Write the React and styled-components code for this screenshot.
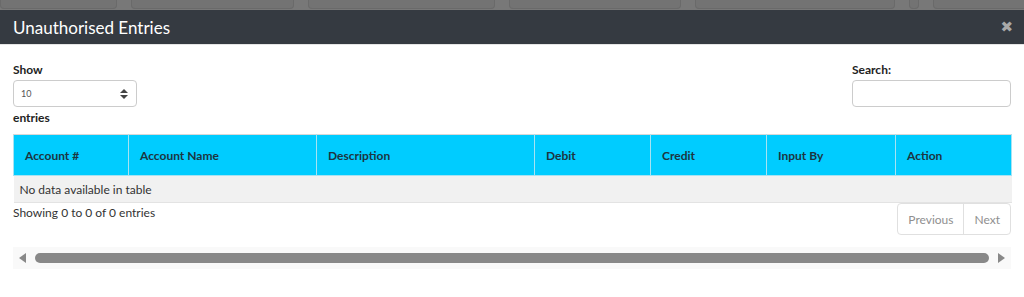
import styled, { createGlobalStyle } from "styled-components";

const Global = createGlobalStyle`
  html, body {
    margin: 0;
    padding: 0;
    background: #787878;
    font-family: "Lato", "Noto Sans", sans-serif;
  }
  * { box-sizing: border-box; }
`;

const Backdrop = styled.div`
  height: 10px;
  display: flex;
  gap: 14px;
  overflow: hidden;
`;

const BackCard = styled.div`
  width: ${(p) => p.w}px;
  flex-shrink: 0;
  height: 9px;
  background: #737373;
  border: 1px solid #6a6a6a;
  border-top: none;
  border-radius: 0 0 4px 4px;
`;

const Modal = styled.div`
  background: #fff;
  height: 287px;
`;

const ModalHeader = styled.div`
  height: 35px;
  background: #353a41;
  display: flex;
  align-items: center;
  justify-content: space-between;
  padding: 0 11px 0 13px;
  border-bottom: 1px solid #e5e5e5;
`;

const Title = styled.h4`
  margin: 0;
  color: #fff;
  font-size: 17px;
  font-weight: 400;
`;

const Close = styled.span`
  color: #a9a9a9;
  font-size: 15px;
  font-weight: 700;
  line-height: 1;
  font-family: "DejaVu Sans", sans-serif;
`;

const Body = styled.div`
  padding: 17px 13px 0 13px;
`;

const Controls = styled.div`
  display: flex;
  justify-content: space-between;
  align-items: flex-start;
`;

const Label = styled.div`
  font-size: 12px;
  font-weight: 700;
  color: #222;
  line-height: 15px;
`;

const SelectBox = styled.div`
  width: 124px;
  height: 27px;
  margin: 3px 0 3px;
  border: 1px solid #ccc;
  border-radius: 4px;
  display: flex;
  align-items: center;
  justify-content: space-between;
  padding: 0 8px 0 7px;
  font-size: 9px;
  color: #555;
`;

const Search = styled.div`
  width: 159px;
`;

const SearchInput = styled.div`
  width: 159px;
  height: 27px;
  margin-top: 3px;
  border: 1px solid #ccc;
  border-radius: 4px;
`;

const Table = styled.table`
  width: 100%;
  margin-top: 9px;
  border-collapse: collapse;
  table-layout: fixed;
  font-size: 12px;
`;

const Th = styled.th`
  width: ${(p) => p.w}px;
  height: 41px;
  background: #00ccff;
  color: #1d3540;
  font-weight: 700;
  text-align: left;
  padding: 0 11px;
  border: 1px solid #a6e3f3;
  border-top-color: #d8d8d8;
`;

const EmptyCell = styled.td`
  height: 27px;
  background: #f1f1f1;
  color: #333;
  padding: 0 6px;
  border-bottom: 1px solid #e3e3e3;
`;

const Footer = styled.div`
  display: flex;
  justify-content: space-between;
  align-items: flex-start;
`;

const Info = styled.div`
  font-size: 12px;
  color: #333;
  padding-top: 2px;
`;

const Pager = styled.div`
  display: flex;
  border: 1px solid #e0e0e0;
  border-radius: 4px;
  height: 32px;
`;

const PageBtn = styled.div`
  padding: 0 ${(p) => p.px}px;
  display: flex;
  align-items: center;
  font-size: 12px;
  color: #8f8f8f;
  & + & {
    border-left: 1px solid #e0e0e0;
  }
`;

const ScrollBar = styled.div`
  margin-top: 12px;
  height: 22px;
  background: #f9f9f9;
  display: flex;
  align-items: center;
  gap: 8px;
  padding: 0 4px;
`;

const Thumb = styled.div`
  flex: 1;
  height: 10px;
  border-radius: 5px;
  background: #888;
`;

const Arrow = ({ dir }) => (
  <svg width="10" height="12" viewBox="0 0 10 12">
    {dir === "left" ? (
      <polygon points="9,1 9,11 2,6" fill="#888" />
    ) : (
      <polygon points="1,1 1,11 8,6" fill="#888" />
    )}
  </svg>
);

const Sorter = () => (
  <svg width="8" height="10" viewBox="0 0 8 10">
    <polygon points="4,0 8,4 0,4" fill="#444" />
    <polygon points="0,6 8,6 4,10" fill="#444" />
  </svg>
);

const columns = [
  ["Account #", 115],
  ["Account Name", 188],
  ["Description", 218],
  ["Debit", 116],
  ["Credit", 116],
  ["Input By", 129],
  ["Action", 116],
];

const backCards = [117, 163, 187, 172, 200, 10, 95];

export default function App() {
  return (
    <>
      <Global />
      <Backdrop>
        {backCards.map((w, i) => (
          <BackCard key={i} w={w} />
        ))}
      </Backdrop>
      <Modal>
        <ModalHeader>
          <Title>Unauthorised Entries</Title>
          <Close>✖</Close>
        </ModalHeader>
        <Body>
          <Controls>
            <div>
              <Label>Show</Label>
              <SelectBox>
                <span>10</span>
                <Sorter />
              </SelectBox>
              <Label>entries</Label>
            </div>
            <Search>
              <Label>Search:</Label>
              <SearchInput />
            </Search>
          </Controls>
          <Table>
            <thead>
              <tr>
                {columns.map(([name, w]) => (
                  <Th key={name} w={w}>
                    {name}
                  </Th>
                ))}
              </tr>
            </thead>
            <tbody>
              <tr>
                <EmptyCell colSpan={7}>No data available in table</EmptyCell>
              </tr>
            </tbody>
          </Table>
          <Footer>
            <Info>Showing 0 to 0 of 0 entries</Info>
            <Pager>
              <PageBtn px={10}>Previous</PageBtn>
              <PageBtn px={10}>Next</PageBtn>
            </Pager>
          </Footer>
          <ScrollBar>
            <Arrow dir="left" />
            <Thumb />
            <Arrow dir="right" />
          </ScrollBar>
        </Body>
      </Modal>
    </>
  );
}
